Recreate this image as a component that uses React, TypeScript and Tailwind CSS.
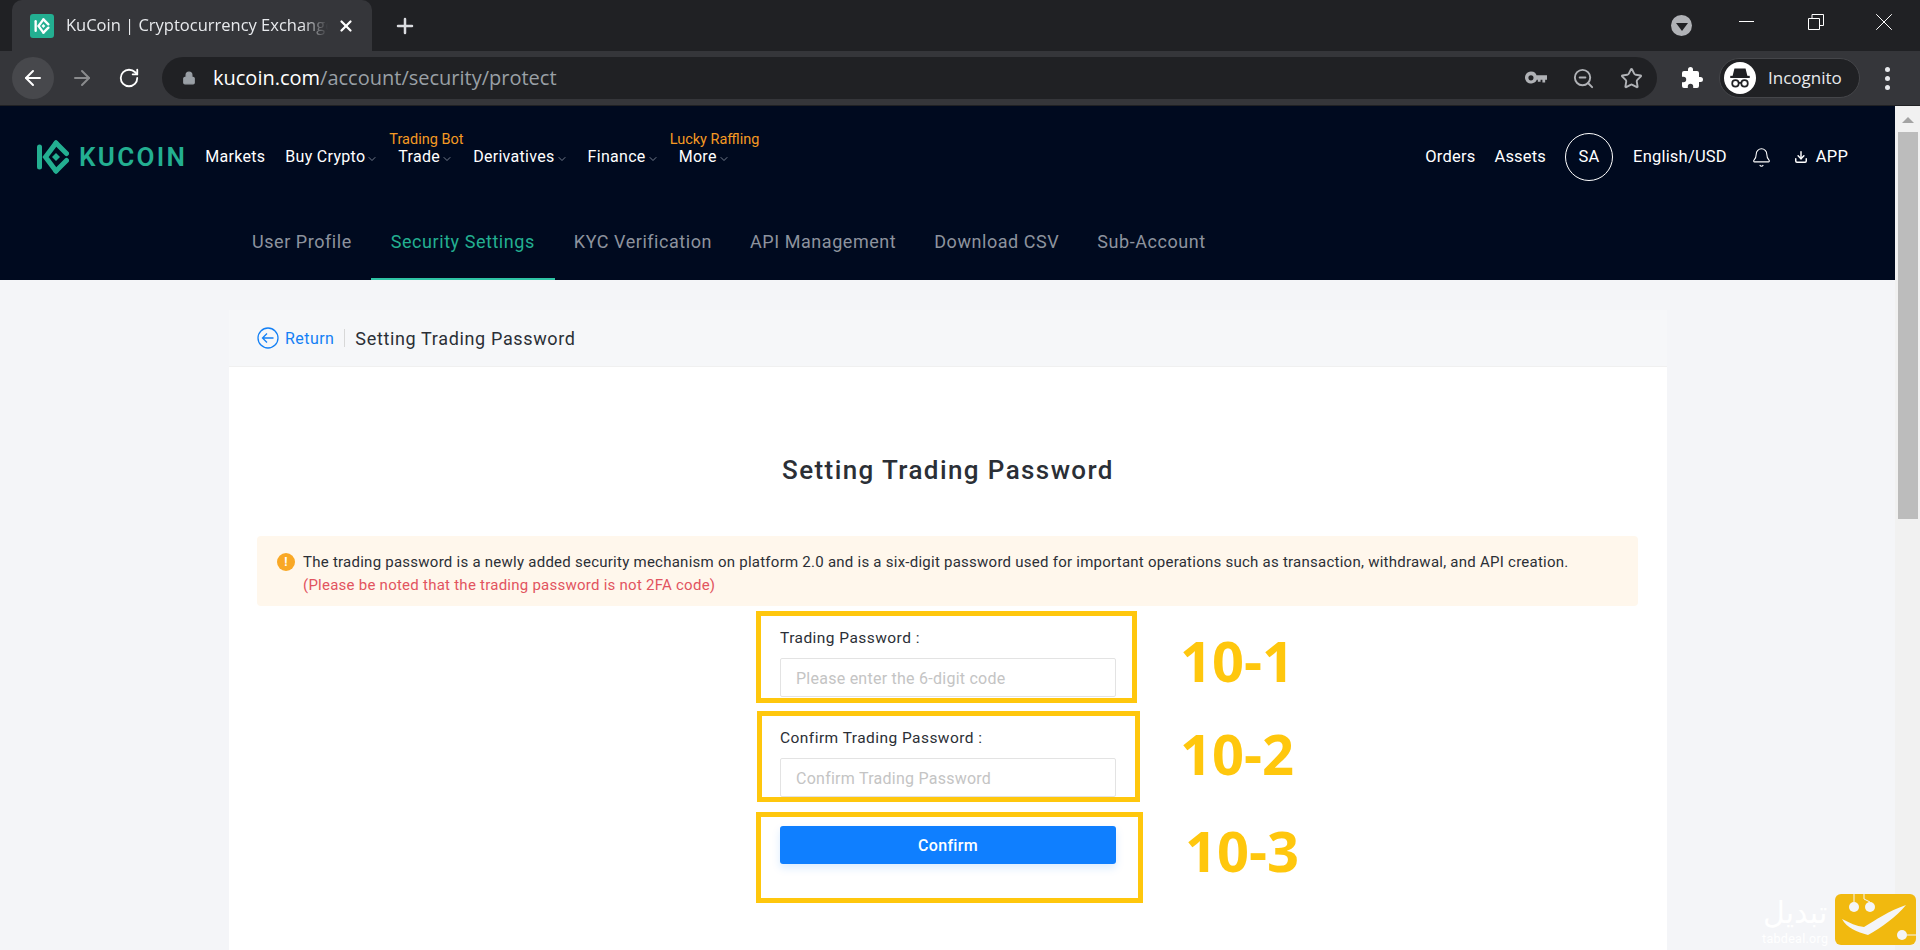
import { ArrowLeft, ArrowRight, RotateCw, Plus, X, Star, ZoomOut, ChevronDown, Download, Bell, Lock } from "lucide-react";

const body = "font-['Roboto',sans-serif]";

function KuLogo({ className }: { className?: string }) {
  return (
    <svg viewBox="0 0 32 34" className={className} fill="none" stroke="currentColor" strokeWidth="5" strokeLinecap="round">
      <path d="M2.500 7v20" />
      <path d="M19 3 8.500 17 19 31" />
      <path d="M19 3 29.500 13.500M19 31 29.500 20.500" />
      <path d="M19 13 23 17 19 21 15 17Z" fill="currentColor" stroke="none" />
    </svg>
  );
}

function NavItem({ label, hint, arrow = true }: { label: string; hint?: string; arrow?: boolean }) {
  return (
    <div className="relative flex items-center text-[16px] tracking-[0.3px] text-white">
      {hint && <span className="absolute -top-[14px] -left-[9px] whitespace-nowrap text-[14.500px] leading-[18px] tracking-normal text-[#f59a23]">{hint}</span>}
      <span>{label}</span>
      {arrow && <ChevronDown size={12} strokeWidth={1.500} className="ml-[1px] mt-[3px] text-gray-400" />}
    </div>
  );
}

function Field({ label, placeholder, className }: { label: string; placeholder: string; className?: string }) {
  return (
    <div className={className}>
      <div className="h-[24px] text-[15.500px] leading-[26px] tracking-[0.45px] text-[#2b2f36]">{label} :</div>
      <div className="mt-[9px] flex h-[39px] items-center rounded-[2px] border border-[#e3e3e3] px-[15px] pt-[2px] text-[16px] tracking-[0.25px] text-[#c4c4c4]">
        {placeholder}
      </div>
    </div>
  );
}

export default function App() {
  return (
    <div className={`relative flex h-[950px] w-[1920px] flex-col overflow-hidden bg-[#f4f5f8] ${body}`}>
      {/* Browser tabs */}
      <div className="flex h-[51px] shrink-0 items-end bg-[#202124] pl-[12px] font-['Open_Sans',sans-serif]">
        <div className="flex h-[51px] w-[360px] items-center rounded-t-[10px] bg-[#35363a] pl-[18px]">
          <div className="flex h-[24px] w-[24px] items-center justify-center rounded-[3px] bg-[#23af91] text-white">
            <KuLogo className="h-[16px] w-[16px]" />
          </div>
          <span className="ml-[12px] w-[262px] overflow-hidden whitespace-nowrap text-[16.500px] text-[#e8eaed] [mask-image:linear-gradient(to_right,black_90%,transparent)]">KuCoin | Cryptocurrency Exchange</span>
          <X size={18} strokeWidth={3} className="ml-[9px] text-white" />
        </div>
        <Plus size={24} strokeWidth={2.500} className="mb-[13px] ml-[21px] text-[#dadce0]" />
        <div className="flex-1" />
        <div className="mb-[15px] mr-[47px] flex h-[21px] w-[21px] items-center justify-center rounded-full bg-[#b0b2b6]">
          <div className="mt-[2px] h-0 w-0 border-x-[6px] border-t-[8px] border-x-transparent border-t-[#202124]" />
        </div>
        <div className="mb-[29px] mr-[54px] h-[1px] w-[15px] bg-white" />
        <svg viewBox="0 0 16 16" className="mb-[21px] mr-[45px] h-[16px] w-[16px]" fill="none" stroke="white">
          <path d="M.5 4.500h11v11H.5zM4 4.500V.5h11.500v11h-4" />
        </svg>
        <X size={30} strokeWidth={0.800} className="mb-[14px] mr-[21px] text-white" />
      </div>
      {/* Browser toolbar */}
      <div className="flex h-[54px] shrink-0 items-center bg-[#35363a] pl-[12px] font-['Open_Sans',sans-serif]">
        <div className="flex h-[42px] w-[42px] items-center justify-center rounded-full bg-[#47484c]">
          <ArrowLeft size={24} className="text-white" />
        </div>
        <ArrowRight size={24} className="ml-[16px] text-[#8a8b8d]" />
        <RotateCw size={22} className="ml-[24px] text-white" />
        <div className="ml-[22px] flex h-[42px] w-[1495px] items-center rounded-full bg-[#202124] pl-[20px] pr-[14px]">
          <Lock size={14} fill="#9aa0a6" className="text-[#9aa0a6]" />
          <span className="ml-[17px] text-[20px] text-white">
            kucoin.com<span className="text-[#9aa0a6]">/account/security/protect</span>
          </span>
          <div className="flex-1" />
          <svg viewBox="0 0 24 14" className="h-[14px] w-[22px]" fill="#b0b2b6">
            <path d="M6.500 0a6.500 6.500 0 1 1-6 9 6.500 6.500 0 0 1 6-9Zm0 4a2.800 2.800 0 1 0 0 5.600 2.800 2.800 0 0 0 0-5.600ZM12 4h12v5h-2v3h-3V9h-2v2h-3V9h-2Z" />
          </svg>
          <ZoomOut size={23} className="ml-[25px] text-[#b0b2b6]" />
          <Star size={23} className="ml-[25px] text-[#b0b2b6]" />
        </div>
        <svg viewBox="0 0 24 24" className="ml-[23px] h-[24px] w-[24px]" fill="white">
          <path d="M20.500 11H19V7a2 2 0 0 0-2-2h-4V3.500a2.500 2.500 0 0 0-5 0V5H4a2 2 0 0 0-2 2v3.800h1.500a2.700 2.700 0 0 1 0 5.400H2V20a2 2 0 0 0 2 2h3.800v-1.500a2.700 2.700 0 0 1 5.400 0V22H17a2 2 0 0 0 2-2v-4h1.500a2.500 2.500 0 0 0 0-5Z" />
        </svg>
        <div className="ml-[15px] flex h-[40px] w-[141px] items-center rounded-full border border-[#45464a] bg-[#202124] pl-[4px]">
          <div className="flex h-[32px] w-[32px] items-center justify-center rounded-full bg-white">
            <svg viewBox="0 0 24 24" className="h-[26px] w-[26px]" fill="none" stroke="#202124" strokeWidth="1.600">
              <path d="M7.500 4h9l1.500 6H6Z" fill="#202124" />
              <path d="M3 11h18" strokeWidth="2" />
              <circle cx="7.800" cy="17" r="3" />
              <circle cx="16.200" cy="17" r="3" />
              <path d="M10.800 16.500h2.400" />
            </svg>
          </div>
          <span className="ml-[12px] text-[17px] text-[#e8eaed]">Incognito</span>
        </div>
        <div className="ml-[25px] flex flex-col gap-[4px]">
          <div className="h-[5px] w-[5px] rounded-full bg-[#e8eaed]" />
          <div className="h-[5px] w-[5px] rounded-full bg-[#e8eaed]" />
          <div className="h-[5px] w-[5px] rounded-full bg-[#e8eaed]" />
        </div>
      </div>
      <div className="h-[1px] shrink-0 bg-[#202124]" />

      <div className="flex min-h-0 flex-1">
        <div className="min-w-0 flex-1">
          {/* Site header */}
          <header className="h-[174px] bg-[#000a1f]">
            <div className="flex h-[102px] items-center pl-[37px] pr-[47px]">
              <KuLogo className="h-[34px] w-[32px] text-[#23af91]" />
              <span className="ml-[10px] text-[26px] font-semibold tracking-[2.300px] text-[#23af91]">KUCOIN</span>
              <div className="ml-[18px] flex items-center gap-[20px]">
                <NavItem label="Markets" arrow={false} />
                <NavItem label="Buy Crypto" />
                <NavItem label="Trade" hint="Trading Bot" />
                <NavItem label="Derivatives" />
                <NavItem label="Finance" />
                <NavItem label="More" hint="Lucky Raffling" />
              </div>
              <div className="flex-1" />
              <div className="flex items-center text-[16.500px] tracking-[0.2px] text-white">
                <span>Orders</span>
                <span className="ml-[19px]">Assets</span>
                <div className="ml-[19px] flex h-[48px] w-[48px] items-center justify-center rounded-full border border-white">SA</div>
                <span className="ml-[20px]">English/USD</span>
                <Bell size={21} strokeWidth={1.200} className="ml-[24px] text-white" />
                <Download size={14} strokeWidth={2.500} className="ml-[22px]" />
                <span className="ml-[8px]">APP</span>
              </div>
            </div>
            <nav className="flex h-[72px] items-center pl-[233px] text-[18px] tracking-[0.55px] text-[#8d939e]">
              <span className="flex h-full items-center px-[19px] pb-[6px]">User Profile</span>
              <span className="flex h-full items-center border-b-[2px] border-[#2fc4a5] px-[20px] pb-[4px] text-[#23af91]">Security Settings</span>
              <span className="flex h-full items-center px-[19px] pb-[6px]">KYC Verification</span>
              <span className="flex h-full items-center px-[19px] pb-[6px]">API Management</span>
              <span className="flex h-full items-center px-[19px] pb-[6px]">Download CSV</span>
              <span className="flex h-full items-center px-[19px] pb-[6px]">Sub-Account</span>
            </nav>
          </header>

          {/* Card */}
          <div className="ml-[229px] mt-[30px] w-[1438px] bg-white pb-[100px]">
            <div className="flex h-[57px] items-center border-b border-[#f0f0f0] bg-[#f6f7f9] pl-[28px]">
              <svg viewBox="0 0 22 22" className="h-[22px] w-[22px]" fill="none" stroke="#1480f5" strokeWidth="1.300">
                <circle cx="11" cy="11" r="10" />
                <path d="M16.500 11h-11M10 6.500 5.500 11l4.500 4.500" />
              </svg>
              <span className="ml-[6px] pt-[1px] text-[16px] tracking-[0.45px] text-[#1480f5]">Return</span>
              <div className="ml-[10px] h-[18px] w-[1px] bg-[#d8d8d8]" />
              <span className="ml-[10px] text-[18px] tracking-[0.65px] text-[#2b2f36]">Setting Trading Password</span>
            </div>
            <h1 className="mt-[83px] text-center text-[26px] leading-[40px] font-medium tracking-[1.400px] text-[#2b2f36]">Setting Trading Password</h1>
            <div className="ml-[28px] mr-[29px] mt-[46px] flex h-[70px] items-start rounded-[4px] bg-[#fff7ec] pl-[20px] pt-[15px] text-[15px] leading-[23px] tracking-[0.25px]">
              <div className="mt-[2px] flex h-[18px] w-[18px] items-center justify-center rounded-full bg-[#f9a825] text-[12px] font-bold text-white">!</div>
              <div className="ml-[8px] text-[#2b2f36]">
                <div>The trading password is a newly added security mechanism on platform 2.0 and is a six-digit password used for important operations such as transaction, withdrawal, and API creation.</div>
                <div className="text-[#e2545f]">(Please be noted that the trading password is not 2FA code)</div>
              </div>
            </div>
            <div className="ml-[551px] w-[336px] pt-[19px]">
              <Field label="Trading Password" placeholder="Please enter the 6-digit code" />
              <Field label="Confirm Trading Password" placeholder="Confirm Trading Password" className="mt-[28px]" />
              <div className="mt-[29px] flex h-[38px] items-center justify-center rounded-[3px] bg-[#0f7fff] pt-[1px] text-[16px] font-medium tracking-[0.3px] text-white shadow-[0_4px_8px_rgba(15,127,255,0.15)]">Confirm</div>
            </div>
          </div>
        </div>
        {/* Scrollbar */}
        <div className="flex w-[25px] shrink-0 flex-col items-center bg-[#f1f1f1]">
          <div className="mt-[11px] h-0 w-0 border-x-[6px] border-b-[6px] border-x-transparent border-b-[#a3a3a3]" />
          <div className="mt-[9px] h-[387px] w-[20px] bg-[#bcbcbc]" />
        </div>
      </div>

      {/* Annotations on top of the screenshot */}
      <div className="absolute top-[611px] left-[756px] h-[92px] w-[381px] border-[5px] border-[#ffc70d]" />
      <div className="absolute top-[711px] left-[757px] h-[91px] w-[383px] border-[5px] border-[#ffc70d]" />
      <div className="absolute top-[812px] left-[756px] h-[91px] w-[387px] border-[5px] border-[#ffc70d]" />
      <div className="absolute top-[626px] left-[1180px] text-[56px] leading-[68px] font-bold text-[#ffc70d] font-['Open_Sans',sans-serif]">10-1</div>
      <div className="absolute top-[719px] left-[1180px] text-[56px] leading-[68px] font-bold text-[#ffc70d] font-['Open_Sans',sans-serif]">10-2</div>
      <div className="absolute top-[816px] left-[1185px] text-[56px] leading-[68px] font-bold text-[#ffc70d] font-['Open_Sans',sans-serif]">10-3</div>

      {/* Watermark */}
      <div className="absolute top-[895px] left-[1762px] flex flex-col items-center text-white">
        <span className="font-['DejaVu_Sans',sans-serif] text-[30px] leading-[36px]">تبدیل</span>
        <span className="mt-[1px] text-[12.500px] leading-[14px] tracking-[0.3px]">tabdeal.org</span>
      </div>
      <svg viewBox="0 0 81 51" className="absolute top-[894px] left-[1835px] h-[51px] w-[81px]">
        <rect width="81" height="51" rx="6" fill="#f1b90f" />
        <circle cx="19" cy="13" r="5" fill="#f4f5f8" />
        <circle cx="35" cy="13" r="5" fill="#f4f5f8" />
        <path d="M19 8V0M35 8 29 5V0" stroke="#f4f5f8" fill="none" />
        <path d="M7 25c8 4 14 7 22 8 12-7 24-16 42-22-10 12-24 22-38 30C22 38 12 34 7 25Z" fill="#f4f5f8" />
        <circle cx="67" cy="41" r="5" fill="#f4f5f8" />
        <path d="M72 41h9" stroke="#f4f5f8" />
      </svg>
    </div>
  );
}
